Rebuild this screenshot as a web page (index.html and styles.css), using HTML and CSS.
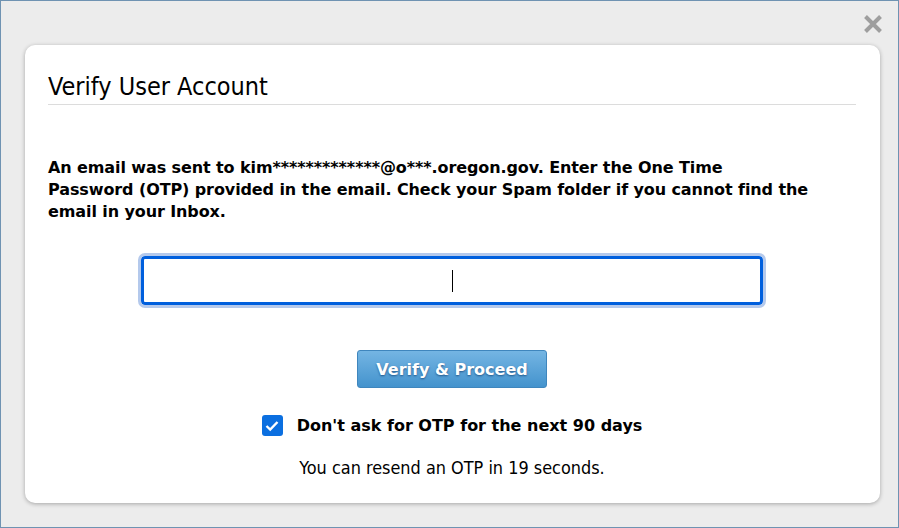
FILE: index.html
```html
<!DOCTYPE html>
<html lang="en">
<head>
    <meta charset="UTF-8">
    <title>Verify User Account</title>
    <link rel="stylesheet" href="styles.css">
</head>
<body>
    <div class="dialog">
        <div class="dialog-bar">
            <button class="close-button" aria-label="Close">
                <svg width="20" height="20" viewBox="0 0 20 20">
                    <path d="M2.5 2.5 L17.5 17.5 M17.5 2.5 L2.5 17.5" stroke="#9e9e9e" stroke-width="4"/>
                </svg>
            </button>
        </div>

        <div class="card">
            <h1>Verify User Account</h1>

            <p class="message">An email was sent to kim*************@o***.oregon.gov. Enter the One Time<br>
                Password (OTP) provided in the email. Check your Spam folder if you cannot find the email in your Inbox.</p>

            <!-- OTP entry -->
            <div class="otp-row">
                <div class="otp-input"><span class="caret"></span></div>
            </div>

            <div class="controls">
                <button class="verify-button">Verify &amp; Proceed</button>
            </div>

            <label class="remember">
                <span class="checkbox">
                    <svg width="14" height="12" viewBox="0 0 14 12">
                        <path d="M1.5 6 L5.2 9.6 L12.5 2" fill="none" stroke="#fff" stroke-width="2.4"/>
                    </svg>
                </span>
                Don't ask for OTP for the next 90 days
            </label>

            <p class="resend">You can resend an OTP in 19 seconds.</p>
        </div>
    </div>
</body>
</html>
```

FILE: styles.css
```css
html, body {
    margin: 0;
    padding: 0;
}

body {
    width: 899px;
    height: 528px;
    font-family: 'DejaVu Sans', Verdana, sans-serif;
    color: #000;
}

.dialog {
    box-sizing: border-box;
    width: 899px;
    height: 528px;
    border: 1px solid #6f93b2;
    background: #ececec;
    display: flex;
    flex-direction: column;
}

.dialog-bar {
    height: 44px;
    display: flex;
    justify-content: flex-end;
    align-items: flex-start;
}

.close-button {
    background: none;
    border: none;
    padding: 0;
    margin: 13px 15px 0 0;
    width: 20px;
    height: 20px;
    cursor: pointer;
}

.close-button svg {
    display: block;
}

.card {
    margin: 0 18px 0 24px;
    height: 458px;
    background: #fff;
    border-radius: 10px;
    box-shadow: 0 1px 4px rgba(0, 0, 0, 0.3);
    padding: 0 24px 0 23px;
}

h1 {
    margin: 0;
    padding-top: 27px;
    padding-bottom: 2px;
    font-family: 'DejaVu Sans Condensed', 'DejaVu Sans', sans-serif;
    font-weight: normal;
    font-size: 25px;
    line-height: 30px;
    border-bottom: 1px solid #dcdcdc;
}

.message {
    margin: 52px 0 0;
    font-size: 16px;
    letter-spacing: -0.1px;
    font-weight: bold;
    line-height: 22px;
}

.otp-row {
    display: flex;
    justify-content: center;
    margin-top: 33px;
}

.otp-input {
    box-sizing: border-box;
    width: 622px;
    height: 49px;
    border: 3px solid #005fdd;
    border-radius: 4px;
    outline: 3px solid #b4c9ec;
    display: flex;
    align-items: center;
    justify-content: center;
}

.caret {
    width: 1px;
    height: 22px;
    background: #000;
}

.controls {
    display: flex;
    justify-content: center;
    margin-top: 45px;
}

.verify-button {
    width: 190px;
    height: 38px;
    border: 1px solid #3f86bd;
    border-radius: 3px;
    background: linear-gradient(#74b5e3, #4493cd);
    color: #fff;
    font-family: 'DejaVu Sans', Verdana, sans-serif;
    font-size: 16px;
    font-weight: bold;
    text-shadow: 0 1px 2px rgba(0, 40, 90, 0.6);
    cursor: pointer;
}

.remember {
    display: flex;
    justify-content: center;
    align-items: center;
    gap: 14px;
    margin-top: 27px;
    font-size: 16px;
    font-weight: bold;
}

.checkbox {
    width: 21px;
    height: 21px;
    border-radius: 3px;
    background: #0b6fe0;
    display: flex;
    align-items: center;
    justify-content: center;
}

.resend {
    margin: 21px 0 0;
    text-align: center;
    font-family: 'DejaVu Sans Condensed', 'DejaVu Sans', sans-serif;
    font-size: 17.9px;
}
```
